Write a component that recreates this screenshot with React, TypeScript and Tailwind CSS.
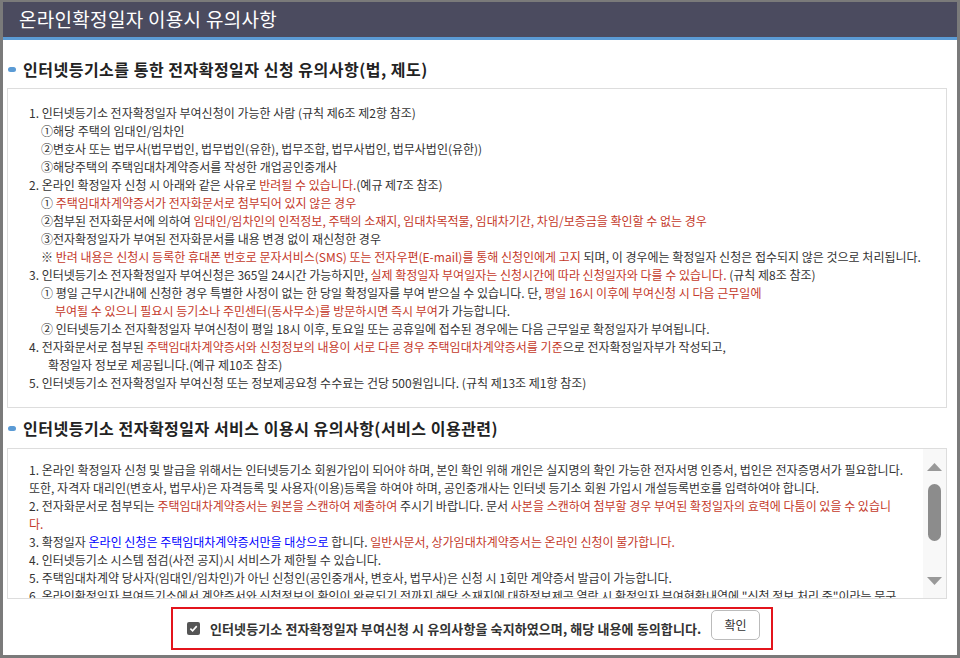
import React from 'react';

const Red: React.FC<{ children: React.ReactNode }> = ({ children }) => (
  <span className="text-[#c4392a]">{children}</span>
);

const Blue: React.FC<{ children: React.ReactNode }> = ({ children }) => (
  <span className="text-[#0000ff]">{children}</span>
);

const SectionTitle: React.FC<{ title: string; className?: string }> = ({ title, className }) => (
  <div className={`flex items-center gap-[7px] pl-[5px] ${className ?? ''}`}>
    <span className="w-[8px] h-[5px] rounded-full bg-[#5b9bd5]" />
    <h2 className="text-[16px] font-bold text-[#222] tracking-[0.5px]">{title}</h2>
  </div>
);

const App: React.FC = () => {
  return (
    <div className="w-[960px] h-[658px] bg-white border-[3px] border-t-2 border-[#7a7a7a] flex flex-col overflow-hidden font-['Noto_Sans_CJK_KR','Noto_Sans',sans-serif] text-[#333]">
      {/* header */}
      <div className="h-[35px] shrink-0 bg-[#4b4b5f] flex items-center pl-[16px]">
        <h1 className="text-[19px] text-white tracking-[0.3px]">온라인확정일자 이용시 유의사항</h1>
      </div>
      <div className="h-[3px] shrink-0 bg-[#5b9bd5]" />

      <SectionTitle title="인터넷등기소를 통한 전자확정일자 신청 유의사항(법, 제도)" className="h-[48px] pt-[10px] shrink-0" />

      {/* box 1 */}
      <div className="ml-[4px] mr-[10px] border border-[#ddd] pl-[21px] py-[15px] text-[12px] leading-[18px] whitespace-nowrap shrink-0">
        <p>1. 인터넷등기소 전자확정일자 부여신청이 가능한 사람 (규칙 제6조 제2항 참조)</p>
        <p className="pl-[12px]">①해당 주택의 임대인/임차인</p>
        <p className="pl-[12px]">②변호사 또는 법무사(법무법인, 법무법인(유한), 법무조합, 법무사법인, 법무사법인(유한))</p>
        <p className="pl-[12px]">③해당주택의 주택임대차계약증서를 작성한 개업공인중개사</p>
        <p>2. 온라인 확정일자 신청 시 아래와 같은 사유로 <Red>반려될 수 있습니다.</Red>(예규 제7조 참조)</p>
        <p className="pl-[12px]">① <Red>주택임대차계약증서가 전자화문서로 첨부되어 있지 않은 경우</Red></p>
        <p className="pl-[12px]">
          ②첨부된 전자화문서에 의하여 <Red>임대인/임차인의 인적정보, 주택의 소재지, 임대차목적물, 임대차기간, 차임/보증금을 확인할 수 없는 경우</Red>
        </p>
        <p className="pl-[12px]">③전자확정일자가 부여된 전자화문서를 내용 변경 없이 재신청한 경우</p>
        <p className="pl-[12px]">
          ※ <Red>반려 내용은 신청시 등록한 휴대폰 번호로 문자서비스(SMS) 또는 전자우편(E-mail)를 통해 신청인에게 고지</Red> 되며, 이 경우에는 확정일자 신청은 접수되지 않은 것으로 처리됩니다.
        </p>
        <p>
          3. 인터넷등기소 전자확정일자 부여신청은 365일 24시간 가능하지만, <Red>실제 확정일자 부여일자는 신청시간에 따라 신청일자와 다를 수 있습니다.</Red> (규칙 제8조 참조)
        </p>
        <p className="pl-[12px]">
          ① 평일 근무시간내에 신청한 경우 특별한 사정이 없는 한 당일 확정일자를 부여 받으실 수 있습니다. 단, <Red>평일 16시 이후에 부여신청 시 다음 근무일에</Red>
        </p>
        <p className="pl-[26px]">
          <Red>부여될 수 있으니 필요시 등기소나 주민센터(동사무소)를 방문하시면 즉시 부여</Red>가 가능합니다.
        </p>
        <p className="pl-[12px]">
          ② 인터넷등기소 전자확정일자 부여신청이 평일 18시 이후, 토요일 또는 공휴일에 접수된 경우에는 다음 근무일로 확정일자가 부여됩니다.
        </p>
        <p>
          4. 전자화문서로 첨부된 <Red>주택임대차계약증서와 신청정보의 내용이 서로 다른 경우 주택임대차계약증서를 기준</Red>으로 전자확정일자부가 작성되고,
        </p>
        <p className="pl-[19px]">확정일자 정보로 제공됩니다.(예규 제10조 참조)</p>
        <p>5. 인터넷등기소 전자확정일자 부여신청 또는 정보제공요청 수수료는 건당 500원입니다. (규칙 제13조 제1항 참조)</p>
      </div>

      <SectionTitle title="인터넷등기소 전자확정일자 서비스 이용시 유의사항(서비스 이용관련)" className="h-[40px] shrink-0" />

      {/* box 2 */}
      <div className="ml-[4px] mr-[10px] h-[151px] border border-[#ddd] flex shrink-0">
        <div className="flex-1 overflow-hidden pl-[21px] pt-[12px] text-[12px] leading-[18px] whitespace-nowrap">
          <p>
            1. 온라인 확정일자 신청 및 발급을 위해서는 인터넷등기소 회원가입이 되어야 하며, 본인 확인 위해 개인은 실지명의 확인 가능한 전자서명 인증서, 법인은 전자증명서가 필요합니다.
          </p>
          <p>
            또한, 자격자 대리인(변호사, 법무사)은 자격등록 및 사용자(이용)등록을 하여야 하며, 공인중개사는 인터넷 등기소 회원 가입시 개설등록번호를 입력하여야 합니다.
          </p>
          <p>
            2. 전자화문서로 첨부되는 <Red>주택임대차계약증서는 원본을 스캔하여 제출하여</Red> 주시기 바랍니다. 문서 <Red>사본을 스캔하여 첨부할 경우 부여된 확정일자의 효력에 다툼이 있을 수 있습니</Red>
          </p>
          <p>
            <Red>다.</Red>
          </p>
          <p>
            3. 확정일자 <Blue>온라인 신청은 주택임대차계약증서만을 대상으로</Blue> 합니다. <Red>일반사문서, 상가임대차계약증서는 온라인 신청이 불가합니다.</Red>
          </p>
          <p>4. 인터넷등기소 시스템 점검(사전 공지)시 서비스가 제한될 수 있습니다.</p>
          <p>5. 주택임대차계약 당사자(임대인/임차인)가 아닌 신청인(공인중개사, 변호사, 법무사)은 신청 시 1회만 계약증서 발급이 가능합니다.</p>
          <p>
            6. 온라인확정일자 부여등기소에서 계약증서와 신청정보의 확인이 완료되기 전까지 해당 소재지에 대한정보제공 열람 시 확정일자 부여현황내역에 "신청 정보 처리 중"이라는 문구
          </p>
        </div>
        {/* scrollbar */}
        <div className="w-[23px] bg-[#f8f8f8] flex flex-col items-center">
          <svg className="mt-[14px]" width="15" height="8" viewBox="0 0 15 8">
            <path d="M7.5 0 L15 8 L0 8 Z" fill="#999" />
          </svg>
          <div className="mt-[13px] w-[13px] h-[57px] rounded-full bg-[#8c8c8c]" />
          <svg className="mt-[36px]" width="15" height="8" viewBox="0 0 15 8">
            <path d="M0 0 L15 0 L7.5 8 Z" fill="#999" />
          </svg>
        </div>
      </div>

      {/* agreement */}
      <div className="flex justify-center pr-[16px] mt-[8px]">
        <div className="w-[602px] h-[43px] border-2 border-[#e3141c] flex items-center pl-[14px] pr-[11px]">
          <div className="w-[13px] h-[13px] rounded-[2px] bg-[#555] flex items-center justify-center">
            <svg width="9" height="9" viewBox="0 0 10 10">
              <path d="M1.5 5.2 L4 7.6 L8.6 2.4" stroke="white" strokeWidth="1.8" fill="none" />
            </svg>
          </div>
          <span className="ml-[10px] text-[13px] font-bold text-[#333] whitespace-nowrap tracking-[0.1px]">
            인터넷등기소 전자확정일자 부여신청 시 유의사항을 숙지하였으며, 해당 내용에 동의합니다.
          </span>
          <button className="ml-auto self-start mt-[1px] w-[49px] h-[30px] border border-[#bbb] rounded-[5px] bg-white text-[12px] text-[#333]">
            확인
          </button>
        </div>
      </div>
    </div>
  );
};

export default App;
